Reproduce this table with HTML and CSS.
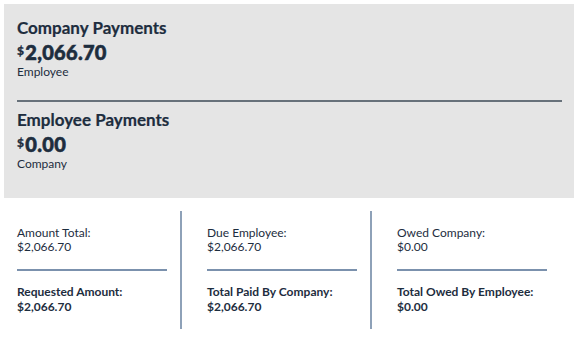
FILE: index.html
```html
<!DOCTYPE html>
<html>
<head>
<meta charset="utf-8">
<link rel="stylesheet" href="styles.css">
</head>
<body>
<div class="panel">
  <div class="group">
    <div class="title">Company Payments</div>
    <div class="amount"><span class="cur">$</span>2,066.70</div>
    <div class="sub">Employee</div>
  </div>
  <div class="divider"></div>
  <div class="group">
    <div class="title">Employee Payments</div>
    <div class="amount"><span class="cur">$</span>0.00</div>
    <div class="sub">Company</div>
  </div>
</div>
<div class="cols">
  <div class="col first">
    <div class="label">Amount Total:</div>
    <div class="value">$2,066.70</div>
    <div class="rule"></div>
    <div class="label strong">Requested Amount:</div>
    <div class="value strong">$2,066.70</div>
  </div>
  <div class="col">
    <div class="label">Due Employee:</div>
    <div class="value">$2,066.70</div>
    <div class="rule"></div>
    <div class="label strong">Total Paid By Company:</div>
    <div class="value strong">$2,066.70</div>
  </div>
  <div class="col last">
    <div class="label">Owed Company:</div>
    <div class="value">$0.00</div>
    <div class="rule"></div>
    <div class="label strong">Total Owed By Employee:</div>
    <div class="value strong">$0.00</div>
  </div>
</div>
</body>
</html>
```
FILE: styles.css
```css
html, body {
  margin: 0;
  padding: 0;
  background: #ffffff;
}
body {
  padding: 4px;
  font-family: Lato, "Noto Sans", sans-serif;
  color: #1d2d3e;
}
.panel {
  width: 570px;
  height: 194px;
  box-sizing: border-box;
  background: #e5e5e5;
  padding: 13px 12px 0 13px;
}
.group {
  display: flex;
  flex-direction: column;
}
.title {
  font-size: 17px;
  font-weight: 700;
  line-height: 22px;
  -webkit-text-stroke: 0.2px #1d2d3e;
}
.amount {
  font-size: 20px;
  font-weight: 900;
  line-height: 26px;
  letter-spacing: 0.3px;
  -webkit-text-stroke: 0.6px #1d2d3e;
}
.cur {
  font-size: 12px;
  line-height: 0;
  vertical-align: 5px;
  font-weight: 900;
  margin-right: 1px;
  -webkit-text-stroke: 0.3px #1d2d3e;
}
.sub {
  font-size: 12px;
  line-height: 14px;
}
.divider {
  height: 2px;
  background: #67717a;
  margin: 21px 0 7px 0;
}
.cols {
  display: flex;
  margin-top: 13px;
}
.col {
  width: 150px;
  padding: 15px 13px 14px 25px;
  border-right: 2px solid #8ea1b8;
  display: flex;
  flex-direction: column;
}
.col.first {
  padding-left: 13px;
}
.col.last {
  border-right: none;
}
.label {
  font-size: 12px;
  line-height: 14px;
}
.value {
  font-size: 12px;
  line-height: 14px;
}
.value.strong {
  line-height: 16px;
}
.strong {
  font-weight: 700;
}
.rule {
  height: 2px;
  background: #7b91ad;
  margin: 15px 0 14px 0;
}
```
